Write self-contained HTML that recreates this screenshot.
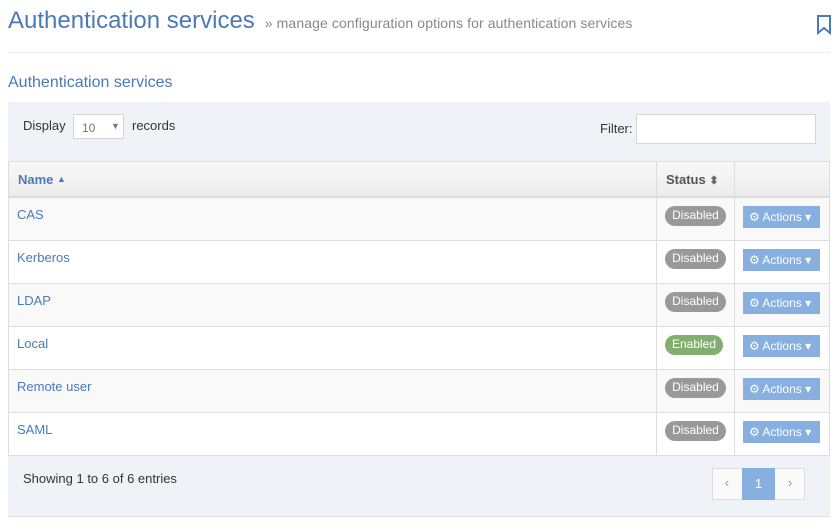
<!DOCTYPE html>
<html><head><meta charset="utf-8"><style>
*{box-sizing:border-box;margin:0;padding:0}
body{width:837px;height:529px;background:#fff;font-family:"Liberation Sans",sans-serif;position:relative;overflow:hidden;color:#333}
.a{position:absolute}
h1{position:absolute;left:8px;top:7px;font-size:24px;font-weight:normal;color:#4a7ab8;white-space:nowrap}
h1 small{font-size:14px;color:#888;margin-left:10px;letter-spacing:0.1px}
.panel{position:absolute;left:8px;top:102px;width:822px;height:415px;background:#eff3f8;border-bottom:1px solid #e2e2e2}
.row{position:absolute;left:8px;width:822px;height:43px;border-bottom:1px solid #ddd;background:#fff;font-size:13px}
.row.o{background:#f9f9f9}
.row .n{position:absolute;left:9px;top:9px;color:#4a7ab8}
.row .c1{position:absolute;left:648px;top:0;width:1px;height:100%;background:#ddd}
.row .c2{position:absolute;left:726px;top:0;width:1px;height:100%;background:#ddd}
.row .c3{position:absolute;left:821px;top:0;width:1px;height:100%;background:#ddd}
.row .c0{position:absolute;left:0;top:0;width:1px;height:100%;background:#ddd}
.badge{position:absolute;left:657px;top:8px;width:61px;height:20px;border-radius:10px;background:#999;color:#fff;font-size:12px;text-align:center;line-height:19px}
.badge.g{background:#82af6f;left:657px;width:58px}
.btn{position:absolute;left:735px;top:8px;width:77px;height:22px;background:#87b0e0;color:#fff;font-size:12px;line-height:22px;padding-left:6px;white-space:nowrap}
</style></head><body>
<h1>Authentication services<small>» manage configuration options for authentication services</small></h1>
<svg class="a" style="left:816px;top:15px" width="16" height="20" viewBox="0 0 16 20"><path d="M2 1h12v17l-6-5-6 5z" fill="none" stroke="#4a7ab8" stroke-width="2"/></svg>
<div class="a" style="left:8px;top:52px;width:822px;border-top:1px dotted #e0e0e0"></div>
<div class="a" style="left:8px;top:74px;font-size:16px;color:#4a7ab8">Authentication services</div>
<div class="panel"></div>
<div class="a" style="left:23px;top:118px;font-size:13px">Display</div>
<div class="a" style="left:73px;top:114px;width:51px;height:25px;border:1px solid #d5d5d5;background:#fff;font-size:12px;color:#777;padding:6px 0 0 8px">10<span style="position:absolute;left:37px;top:6px;font-size:9px">▼</span></div>
<div class="a" style="left:132px;top:118px;font-size:13px">records</div>
<div class="a" style="left:600px;top:121px;font-size:13px">Filter:</div>
<div class="a" style="left:636px;top:114px;width:180px;height:30px;border:1px solid #d5d5d5;background:#fff"></div>
<div class="a" style="left:8px;top:161px;width:822px;height:37px;background:linear-gradient(#f8f8f8,#ececec);border:1px solid #ddd;border-bottom:2px solid #ddd;font-size:13px;font-weight:bold">
<span class="a" style="left:9px;top:10px;color:#4a7ab8">Name <span style="font-size:9px;vertical-align:2px">▲</span></span>
<div class="a" style="left:647px;top:0;width:1px;height:36px;background:#ddd"></div>
<span class="a" style="left:657px;top:10px;color:#555">Status <span style="font-size:11px;color:#666">⬍</span></span>
<div class="a" style="left:725px;top:0;width:1px;height:36px;background:#ddd"></div>
</div>
<div class="row o" style="top:198px"><div class="c0"></div><span class="n">CAS</span><div class="c1"></div><div class="c2"></div><div class="c3"></div><span class="badge">Disabled</span><span class="btn">⚙ Actions ▾</span></div>
<div class="row" style="top:241px"><div class="c0"></div><span class="n">Kerberos</span><div class="c1"></div><div class="c2"></div><div class="c3"></div><span class="badge">Disabled</span><span class="btn">⚙ Actions ▾</span></div>
<div class="row o" style="top:284px"><div class="c0"></div><span class="n">LDAP</span><div class="c1"></div><div class="c2"></div><div class="c3"></div><span class="badge">Disabled</span><span class="btn">⚙ Actions ▾</span></div>
<div class="row" style="top:327px"><div class="c0"></div><span class="n">Local</span><div class="c1"></div><div class="c2"></div><div class="c3"></div><span class="badge g">Enabled</span><span class="btn">⚙ Actions ▾</span></div>
<div class="row o" style="top:370px"><div class="c0"></div><span class="n">Remote user</span><div class="c1"></div><div class="c2"></div><div class="c3"></div><span class="badge">Disabled</span><span class="btn">⚙ Actions ▾</span></div>
<div class="row" style="top:413px"><div class="c0"></div><span class="n">SAML</span><div class="c1"></div><div class="c2"></div><div class="c3"></div><span class="badge">Disabled</span><span class="btn">⚙ Actions ▾</span></div>
<div class="a" style="left:23px;top:471px;font-size:13px">Showing 1 to 6 of 6 entries</div>
<div class="a" style="left:712px;top:468px;width:93px;height:32px;border:1px solid #ddd;background:#fafafa"></div>
<div class="a" style="left:712px;top:468px;width:30px;height:32px;text-align:center;line-height:30px;color:#999;font-size:13px">‹</div>
<div class="a" style="left:742px;top:468px;width:33px;height:32px;background:#87b0e0;color:#fff;text-align:center;line-height:32px;font-size:13px">1</div>
<div class="a" style="left:775px;top:468px;width:30px;height:32px;text-align:center;line-height:30px;color:#999;font-size:13px">›</div>
</body></html>
